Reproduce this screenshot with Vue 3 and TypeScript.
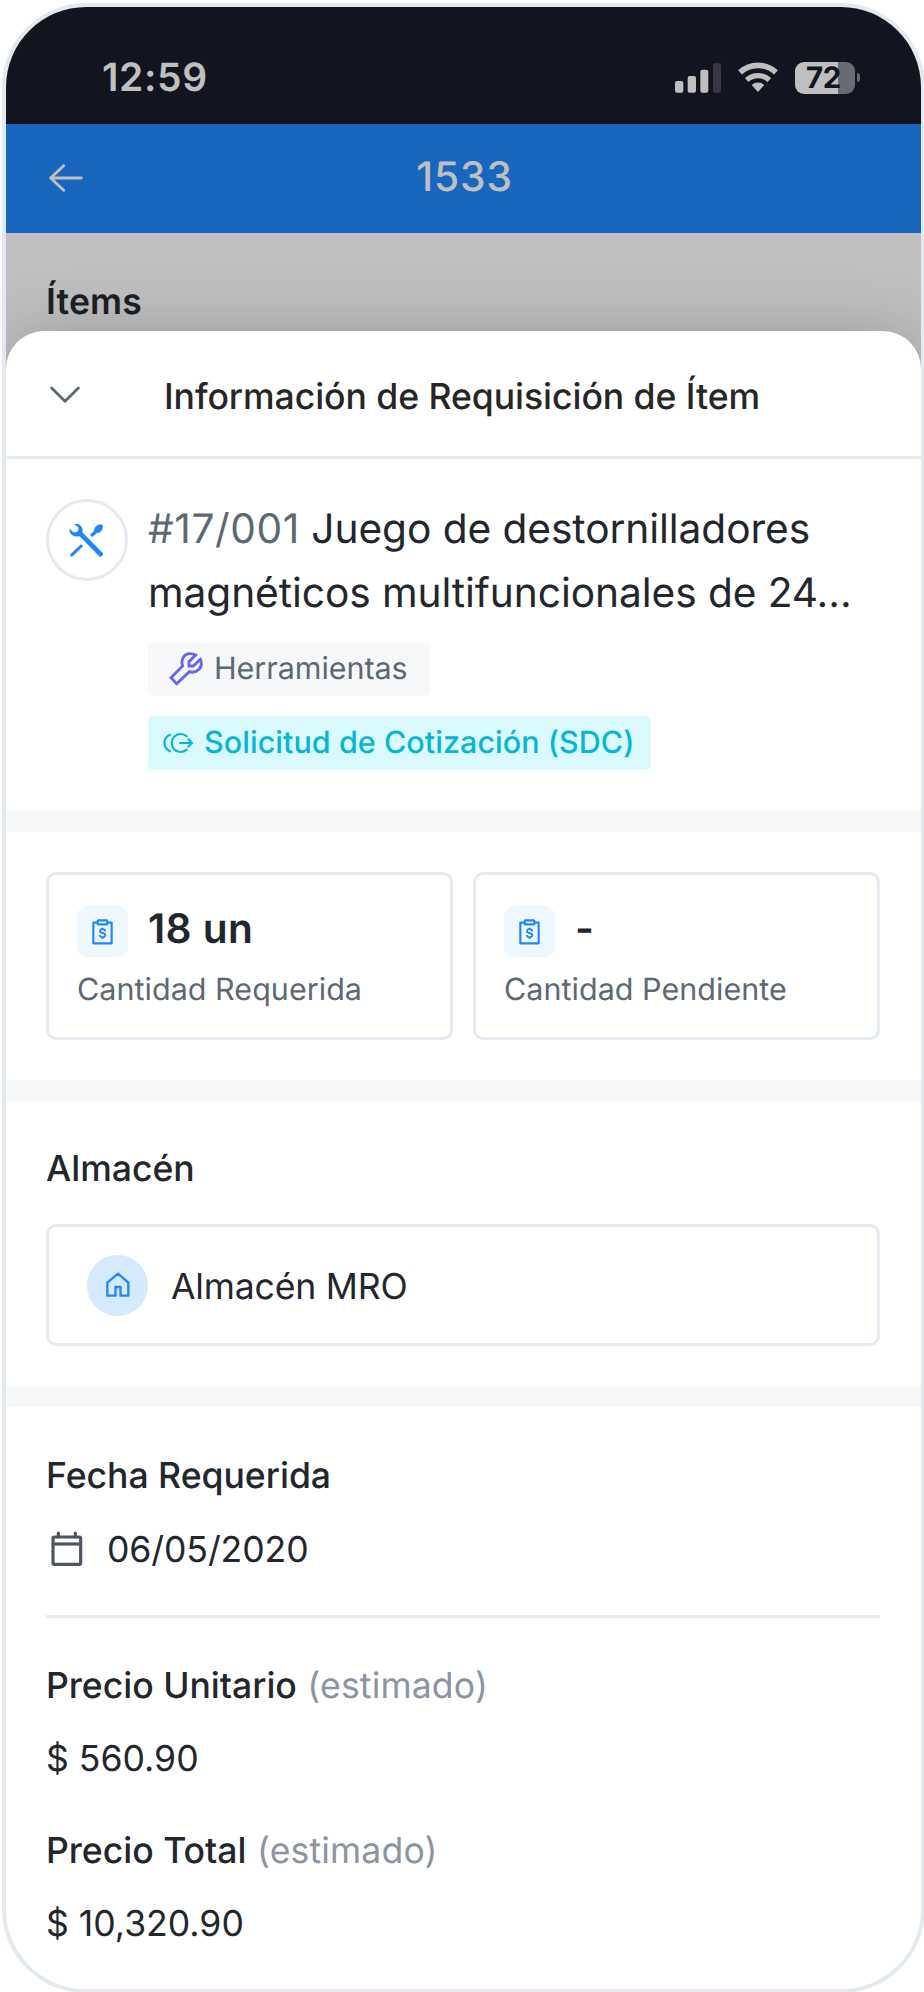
<script setup lang="ts">
interface Quantity {
  value: string
  label: string
}

interface Price {
  label: string
  amount: string
}

const quantities: Quantity[] = [
  { value: '18 un', label: 'Cantidad Requerida' },
  { value: '-', label: 'Cantidad Pendiente' }
]

const prices: Price[] = [
  { label: 'Precio Unitario', amount: '$ 560.90' },
  { label: 'Precio Total', amount: '$ 10,320.90' }
]
</script>

<template>
  <div class="stage">
    <div class="phone">
      <div class="status">
        <span class="time">12:59</span>
        <div class="indicators">
          <svg width="46" height="30" viewBox="0 0 138 90">
            <g fill="#bfbfbf">
              <rect x="0" y="54" width="25" height="35" rx="6" />
              <rect x="38" y="39" width="25" height="50" rx="6" />
              <rect x="76" y="20" width="24" height="69" rx="6" />
            </g>
            <rect x="114" y="1" width="24" height="88" rx="6" fill="#383743" />
          </svg>
          <svg class="wifi" width="40" height="30" viewBox="0 0 120 90" fill="none" stroke="#bfbfbf">
            <path d="M6 31A80 80 0 0 1 114 31" stroke-width="17" />
            <path d="M26 54A50 50 0 0 1 94 54" stroke-width="16" />
            <path d="M60 90L41 69A28 28 0 0 1 79 69Z" fill="#bfbfbf" stroke="none" />
          </svg>
          <div class="battery">
            <div class="cell">72</div>
            <div class="nub"></div>
          </div>
        </div>
      </div>

      <header class="appbar">
        <svg class="back" width="34" height="28" viewBox="0 0 102 84" fill="none" stroke="#bfbfbf" stroke-width="8.5" stroke-linecap="round" stroke-linejoin="round">
          <path d="M97 42H5M44 5L5 42L44 79" />
        </svg>
        <span class="appbar-title">1533</span>
      </header>

      <div class="behind">Ítems</div>

      <main class="sheet">
        <div class="sheet-head">
          <svg class="chevron" width="30" height="18" viewBox="0 0 90 54" fill="none" stroke="#5e6875" stroke-width="8.5" stroke-linecap="round" stroke-linejoin="round">
            <path d="M5 6L45 46L85 6" />
          </svg>
          <span>Información de Requisición de Ítem</span>
        </div>

        <section class="item">
          <div class="avatar">
            <svg width="35" height="35" viewBox="0 0 105 105" fill="#1f86ff">
              <path d="M15 3Q28 0 36 9Q43 17 40 28L102 91V95L96 101H92L32 40Q17 43 8 35Q0 28 2 17L13 28H22L28 22V13Z" />
              <path d="M63 35L75 24Q75 12 86 6L97 4L102 9L100 19Q96 30 84 30L71 42Q66 40 63 35Z" />
              <path d="M36 64Q40 66 42 70L11 100Q6 103 4 98V94Z" />
            </svg>
          </div>
          <div class="item-body">
            <h1 class="item-name"><span>#17/001</span> Juego de destornilladores magnéticos multifuncionales de 24...</h1>
            <div class="tag tag-category">
              <svg width="34" height="34" viewBox="0 0 102 102" fill="none" stroke="#6266f0" stroke-width="8.5">
                <path d="M6 77L41 42C34 24 45 4 64 5Q73 5 80 9L60 29V42H73L94 22C99 34 97 46 89 53C81 60 70 62 61 59L23 95Z" />
              </svg>
              <span>Herramientas</span>
            </div>
            <div class="tag tag-stage">
              <svg width="31" height="22" viewBox="0 0 93 66" fill="none" stroke="#06b6d4" stroke-width="6.5" stroke-linecap="round" stroke-linejoin="round">
                <path d="M21 8C10 14 4 23 4 33S10 52 21 58" />
                <path d="M71 13A27 27 0 1 0 71 53" />
                <path d="M51 33H86M76 22L87 33L76 44" />
              </svg>
              <span>Solicitud de Cotización (SDC)</span>
            </div>
          </div>
        </section>

        <section class="quantities">
          <div v-for="q in quantities" :key="q.label" class="card">
            <div class="card-top">
              <div class="card-icon">
                <svg width="21" height="26" viewBox="0 0 63 78" fill="none" stroke="#1f86ff" stroke-width="6.5" stroke-linejoin="round">
                  <path d="M18 11H4V73H59V11H45" />
                  <rect x="17" y="4" width="29" height="12" rx="2" />
                  <path d="M40 37C39 28 24 28 24 36C24 46 40 39 40 48C40 57 24 56 23 48M31.500 26V31M31.500 54V60" stroke-width="5.5" />
                </svg>
              </div>
              <strong>{{ q.value }}</strong>
            </div>
            <span class="card-label">{{ q.label }}</span>
          </div>
        </section>

        <section class="warehouse">
          <h2>Almacén</h2>
          <div class="warehouse-box">
            <div class="warehouse-icon">
              <svg width="24" height="26" viewBox="0 0 72 78" fill="none" stroke="#1f86ff" stroke-width="7" stroke-linejoin="round">
                <path d="M4 71V32L36 5L67 32V71H43.500V45H28.500V71Z" />
              </svg>
            </div>
            <span>Almacén MRO</span>
          </div>
        </section>

        <section class="details">
          <h2>Fecha Requerida</h2>
          <div class="date">
            <svg width="32" height="36" viewBox="0 0 96 108" fill="none" stroke="#4b5563" stroke-width="9.5" stroke-linejoin="round">
              <rect x="6" y="18" width="83" height="82" rx="4" />
              <path d="M6 39H89" />
              <path d="M22 6V18M73 6V18" stroke-linecap="round" />
            </svg>
            <span>06/05/2020</span>
          </div>
          <hr />
          <div v-for="p in prices" :key="p.label" class="price">
            <h2>{{ p.label }} <small>(estimado)</small></h2>
            <p>{{ p.amount }}</p>
          </div>
        </section>
      </main>
    </div>
  </div>
</template>

<style>
body {
  margin: 0;
  background: #fff;
}
</style>

<style scoped>
.stage {
  box-sizing: border-box;
  width: 924px;
  height: 1992px;
  padding: 3px 0 0 2px;
  overflow: hidden;
  background: #fff;
  color: #22272e;
  font-family: Inter, "Liberation Sans", sans-serif;
  font-size: 35.58px;
  line-height: 44px;
  text-rendering: geometricPrecision;
}

.stage svg {
  display: block;
  flex: none;
}

.phone {
  width: 915px;
  height: 1982px;
  border: 4px solid #e2e9f1;
  border-radius: 84px;
  overflow: hidden;
  background: #fff;
}

.status {
  box-sizing: border-box;
  height: 117px;
  padding: 24px 61px 0 96px;
  display: flex;
  align-items: center;
  justify-content: space-between;
  background: #12141f;
  color: #bfbfbf;
}

.time {
  font-size: 39px;
  font-weight: 600;
  letter-spacing: 0.6px;
}

.indicators,
.battery {
  display: flex;
  align-items: center;
}

.indicators {
  gap: 17px;
}

.wifi {
  margin-top: -1px;
}

.battery {
  gap: 2px;
}

.cell {
  width: 60px;
  height: 32px;
  border-radius: 9px;
  background: linear-gradient(to right, #bfbfbf 43px, #6a6a73 43px);
  color: #12141f;
  font-size: 29.500px;
  font-weight: 700;
  line-height: 32px;
  text-align: center;
  text-indent: -3px;
  letter-spacing: -0.4px;
}

.nub {
  width: 3px;
  height: 9px;
  border-radius: 0 3px 3px 0;
  background: #6a6a73;
}

.appbar {
  box-sizing: border-box;
  height: 109px;
  padding: 0 41px 4px 43px;
  display: grid;
  grid-template-columns: 1fr auto 1fr;
  align-items: center;
  background: #1966bf;
  color: #bfbfbf;
}

.back {
  margin-top: 3px;
}

.appbar-title {
  font-size: 40.67px;
  font-weight: 500;
  letter-spacing: 0.9px;
}

.behind {
  box-sizing: border-box;
  height: 138px;
  padding: 47px 40px 0;
  background: #bfbfbf;
  color: #1b1f25;
  font-weight: 600;
  letter-spacing: 0.15px;
}

.sheet {
  height: 1700px;
  margin-top: -40px;
  border-radius: 38px 38px 0 0;
  background: #fff;
  box-shadow: 0 0 62px rgba(0, 0, 0, 0.19);
}

.sheet-head {
  box-sizing: border-box;
  height: 128px;
  padding: 7px 47px 0 44px;
  display: grid;
  grid-template-columns: 1fr auto 1fr;
  align-items: center;
  border-bottom: 3px solid #e5ebf2;
  color: #262626;
  font-weight: 500;
  letter-spacing: -0.06px;
}

.chevron {
  margin-top: -4px;
}

.item {
  box-sizing: border-box;
  height: 352px;
  padding: 38px 41px 0 40px;
  display: flex;
  gap: 20px;
}

.avatar {
  box-sizing: border-box;
  flex: none;
  width: 82px;
  height: 82px;
  margin-top: 2px;
  padding-right: 1px;
  display: flex;
  align-items: center;
  justify-content: center;
  border: 3px solid #e4eaf2;
  border-radius: 50%;
}

.item-body {
  display: flex;
  flex-direction: column;
  align-items: flex-start;
}

.item-name {
  width: 732px;
  margin: 0 0 17px;
  font-size: 40.67px;
  font-weight: 400;
  line-height: 64px;
  letter-spacing: -0.07px;
}

.item-name span {
  color: #5e6875;
  letter-spacing: 0.6px;
}

.tag {
  box-sizing: border-box;
  height: 54px;
  display: flex;
  align-items: center;
  border-radius: 5px;
  font-size: 30.5px;
  white-space: nowrap;
}

.tag-category {
  width: 282px;
  padding-left: 21px;
  gap: 11px;
  background: #f6f8fa;
  color: #5e6875;
  letter-spacing: -0.05px;
}

.tag-stage {
  width: 503px;
  margin-top: 20px;
  padding-left: 15px;
  gap: 10px;
  background: #dbfafe;
  color: #06b6d4;
  font-weight: 500;
  letter-spacing: 0.04px;
}

.quantities {
  display: grid;
  grid-template-columns: 1fr 1fr;
  gap: 20px;
  padding: 40px 41px 40px 40px;
  border-top: 21px solid #f6f8fa;
}

.card {
  box-sizing: border-box;
  height: 168px;
  padding: 31px 28px 0;
  border: 3px solid #e5ebf2;
  border-radius: 10px;
}

.card-top {
  display: flex;
  align-items: center;
  gap: 20px;
  margin-bottom: 13px;
}

.card-top strong {
  margin-top: -5px;
  font-size: 40.67px;
  font-weight: 600;
  letter-spacing: 0.4px;
}

.card-icon {
  box-sizing: border-box;
  width: 51px;
  height: 51px;
  padding-right: 1px;
  display: flex;
  align-items: center;
  justify-content: center;
  border-radius: 10px;
  background: #f0f8ff;
}

.card-label {
  display: block;
  color: #5e6875;
  font-size: 30.5px;
  line-height: 40px;
  letter-spacing: 0.03px;
}

h2 {
  margin: 0;
  font-size: 35.58px;
  font-weight: 500;
  letter-spacing: -0.02px;
}

.warehouse {
  box-sizing: border-box;
  height: 307px;
  padding: 46px 41px 0 40px;
  border-top: 21px solid #f6f8fa;
}

.warehouse-box {
  box-sizing: border-box;
  height: 122px;
  margin-top: 33px;
  padding-left: 38px;
  display: flex;
  align-items: center;
  gap: 23px;
  border: 3px solid #e5ebf2;
  border-radius: 10px;
  letter-spacing: -0.2px;
}

.warehouse-icon {
  width: 61px;
  height: 61px;
  display: flex;
  align-items: center;
  justify-content: center;
  border-radius: 50%;
  background: #d5e9ff;
}

.warehouse-box span {
  margin-top: 4px;
}

.details {
  padding: 47px 41px 0 40px;
  border-top: 20px solid #f6f8fa;
}

.date {
  display: flex;
  align-items: center;
  gap: 24px;
  margin-top: 30px;
  padding-left: 5px;
  letter-spacing: -0.1px;
}

.date svg {
  margin-top: -2px;
}

hr {
  height: 3px;
  margin: 43px 0 46px;
  border: 0;
  background: #e5ebf2;
}

.price {
  margin-bottom: 48px;
}

.price p {
  margin: 29px 0 0;
}

small {
  margin-left: 1px;
  color: #8a95a1;
  font-size: inherit;
  font-weight: 400;
  letter-spacing: 0.15px;
}
</style>
